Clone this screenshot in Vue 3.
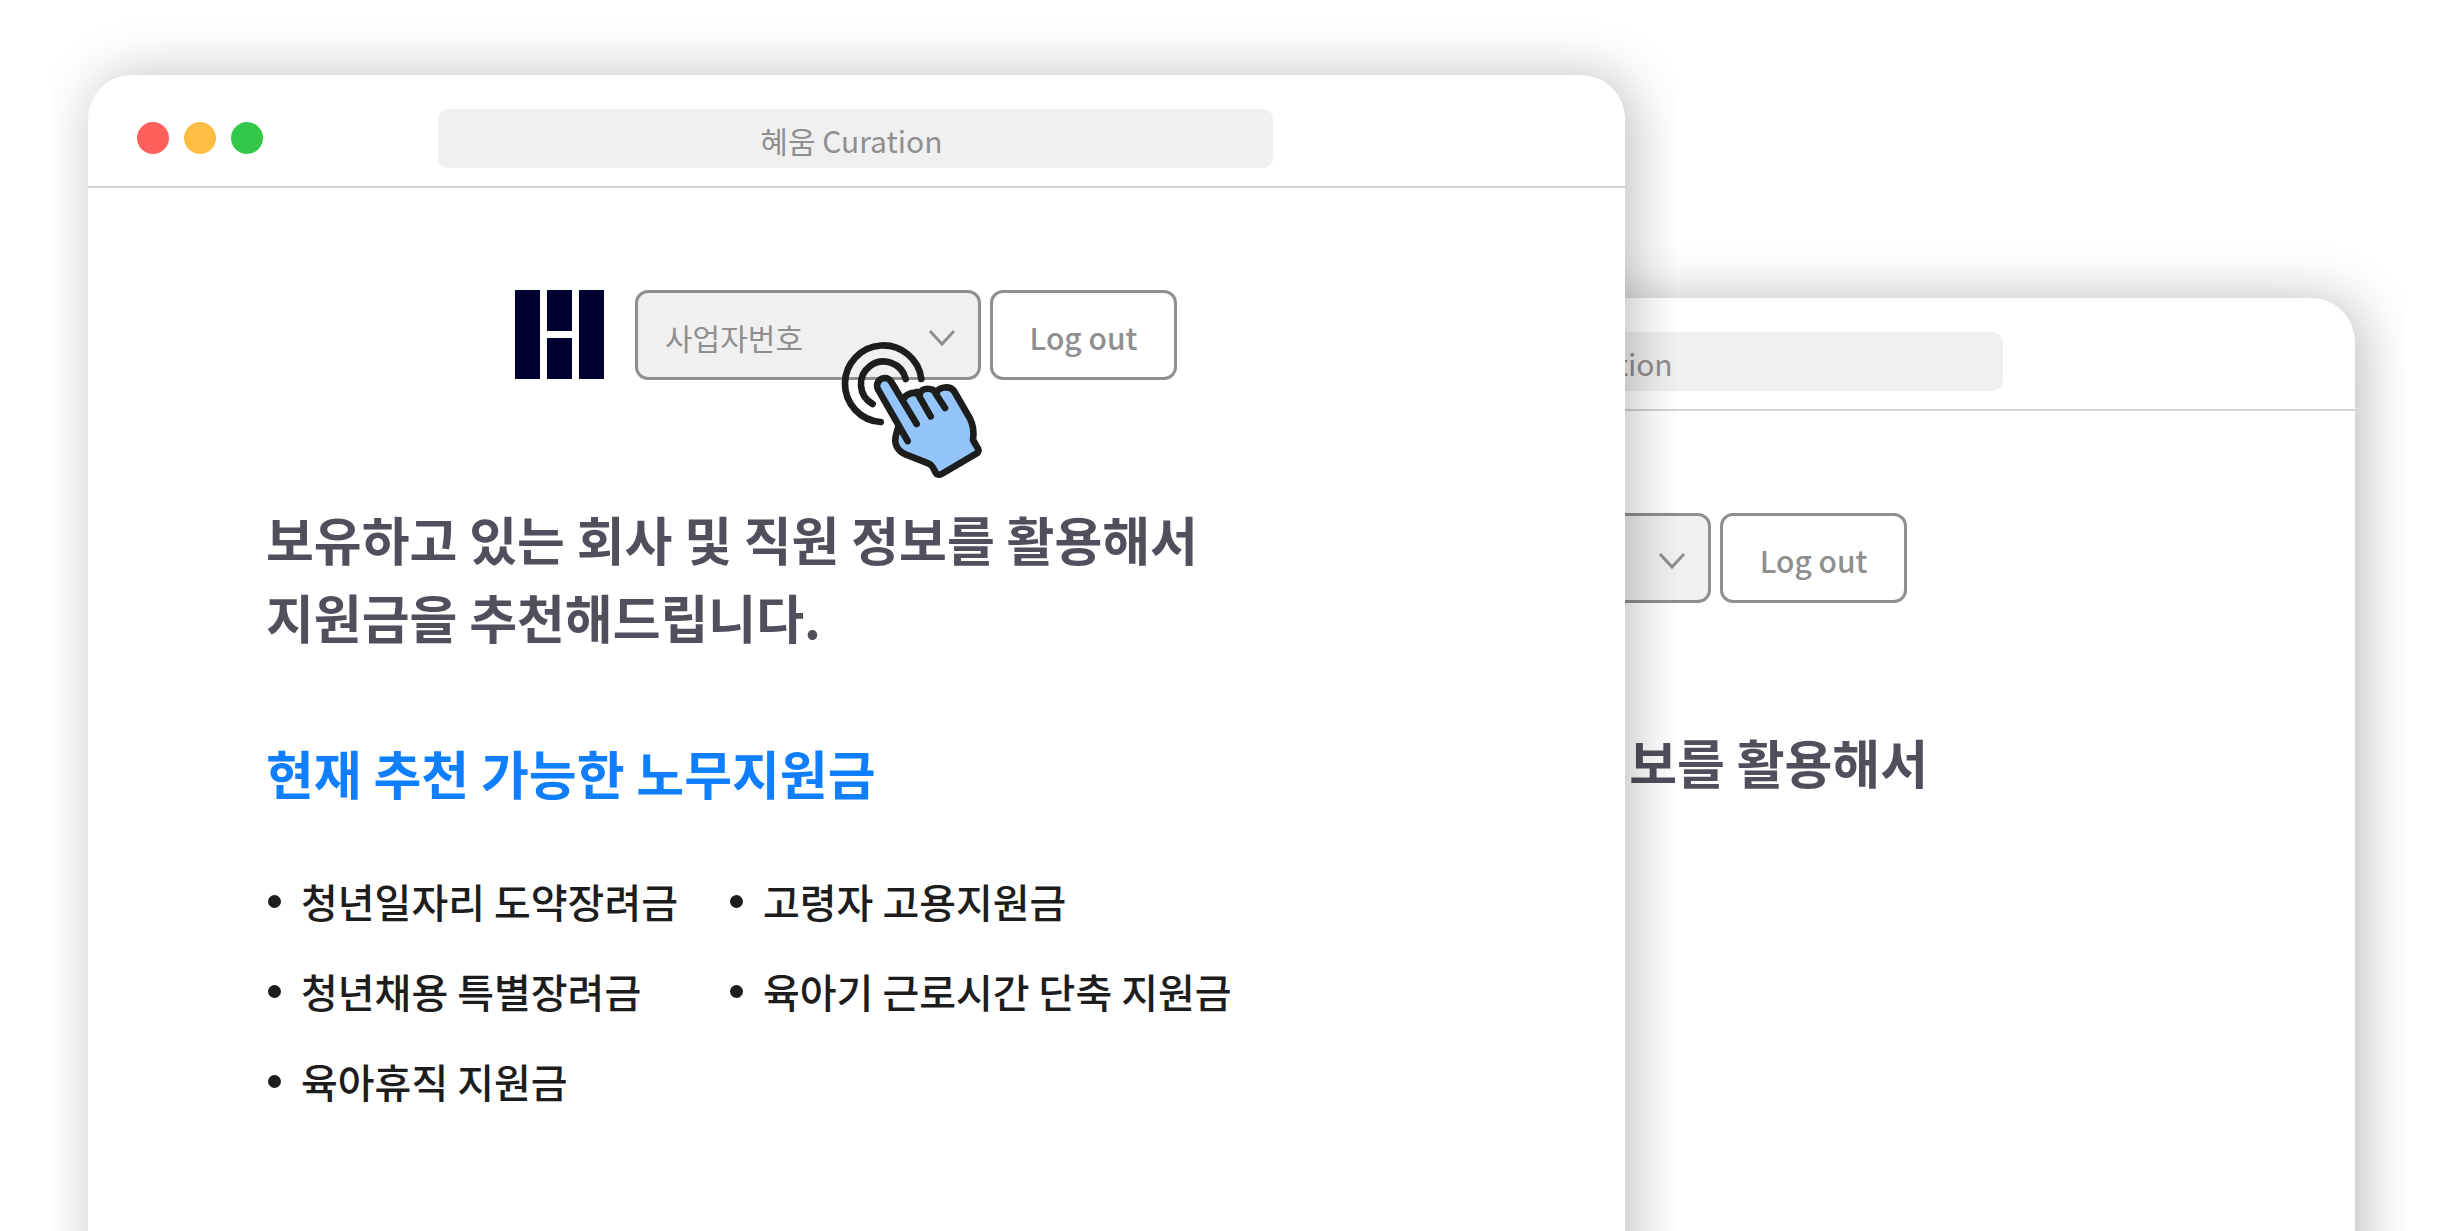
<script setup>
const headline = ['보유하고 있는 회사 및 직원 정보를 활용해서', '지원금을 추천해드립니다.']

const windows = [
  { id: 'back', interactive: false, grants: [] },
  {
    id: 'front',
    interactive: true,
    grants: [
      ['청년일자리 도약장려금', '청년채용 특별장려금', '육아휴직 지원금'],
      ['고령자 고용지원금', '육아기 근로시간 단축 지원금'],
    ],
  },
]
</script>

<template>
  <main class="stage">
    <section v-for="win in windows" :key="win.id" class="window" :class="win.id">
      <header class="titlebar">
        <div class="lights">
          <span class="light red"></span>
          <span class="light yellow"></span>
          <span class="light green"></span>
        </div>
        <input class="address" type="text" value="혜움 Curation" aria-label="주소" readonly />
      </header>

      <div class="content">
        <nav class="toolbar">
          <svg class="logo" viewBox="0 0 89 89" aria-hidden="true">
            <path d="M0 0h25v89H0zM32 0h25v41H32zM32 48h25v41H32zM64 0h25v89H64z" fill="#000030" />
          </svg>
          <div class="picker">
            <select class="select" aria-label="사업자번호">
              <option>사업자번호</option>
            </select>
            <svg class="chevron" viewBox="0 0 28 18" aria-hidden="true">
              <path d="M2 2l12 13L26 2" fill="none" stroke="#8f8f8f" stroke-width="3" />
            </svg>
            <svg v-if="win.interactive" class="pointer" viewBox="60 60 432 420" aria-hidden="true">
              <g fill="none" stroke="#1d1d1b" stroke-width="20" stroke-linecap="round" stroke-linejoin="round">
                <path d="M304 177A115 115 0 1 0 182 306" />
                <path d="M257 177A68 68 0 1 0 158 252" />
                <path
                  d="M263 363L174 208C166 191 177 175 194 174C203 174 210 179 214 186L249 240C255 224 276 212 300 223C304 206 334 198 350 221C354 202 389 195 402 213L449 294C459 313 463 333 459 360L474 386C477 391 475 397 470 400L365 462C358 466 350 464 347 458L338 441C335 435 330 432 325 430L258 404C232 393 221 371 228 345L236 317Z"
                  fill="#93c5fb"
                  stroke="none"
                />
                <path
                  d="M263 363L174 208C166 191 177 175 194 174C203 174 210 179 214 186L290 312M249 240C255 224 276 212 300 223M290 216L332 289M300 218C308 204 336 200 350 221M340 210L375 264M350 216C357 202 389 195 402 213L449 294C459 313 463 333 459 360L474 386C477 391 475 397 470 400L365 462C358 466 350 464 347 458L338 441C335 435 330 432 325 430L258 404C232 393 221 371 228 345L234 324"
                />
              </g>
            </svg>
          </div>
          <button class="logout" type="button">Log out</button>
        </nav>

        <h1 class="headline">
          <span v-for="line in headline" :key="line">{{ line }}</span>
        </h1>

        <template v-if="win.grants.length">
          <h2 class="subhead">현재 추천 가능한 노무지원금</h2>
          <div class="grants">
            <ul v-for="(column, i) in win.grants" :key="i">
              <li v-for="grant in column" :key="grant">{{ grant }}</li>
            </ul>
          </div>
        </template>
      </div>
    </section>
  </main>
</template>

<style>
body {
  margin: 0;
  background: #fff;
}
</style>

<style scoped>
.stage {
  display: grid;
  min-height: 100vh;
  overflow: hidden;
  font-family: "Noto Sans CJK KR", sans-serif;
}

.window {
  grid-area: 1 / 1;
  box-sizing: border-box;
  width: 62.45%;
  border-radius: 44px 44px 0 0;
  background: #fff;
  box-shadow: 7px 2px 56px rgba(0, 0, 0, 0.27);
  clip-path: inset(-60px -50px 0 -36px);
}

.front {
  margin: 75px 0 -80px 88px;
}

.back {
  justify-self: end;
  margin: 298px 106px -80px 0;
}

.titlebar {
  display: flex;
  align-items: center;
  box-sizing: border-box;
  height: 113px;
  padding: 15px 352px 0 49px;
  border-bottom: 2px solid #d4d4d4;
}

.lights {
  display: flex;
  gap: 15px;
  margin-right: 175px;
}

.light {
  width: 32px;
  height: 32px;
  border-radius: 50%;
}

.red {
  background: #ff605c;
}

.yellow {
  background: #ffbd44;
}

.green {
  background: #34c84a;
}

.address {
  flex: 1;
  min-width: 0;
  box-sizing: border-box;
  height: 59px;
  padding: 4px 8px 0 0;
  border: 0;
  border-radius: 10px;
  background: #f0f0f0;
  color: #8f8f8f;
  font: 400 30px "Noto Sans CJK KR", sans-serif;
  text-align: center;
}

.content {
  padding: 102px 178px 0;
}

.toolbar {
  display: flex;
  align-items: flex-start;
  margin-left: 249px;
}

.logo {
  width: 89px;
  height: 89px;
  margin-right: 31px;
}

.picker {
  position: relative;
  margin-right: 9px;
}

.select,
.logout {
  box-sizing: border-box;
  height: 90px;
  border: 3px solid #8f8f8f;
  border-radius: 13px;
  color: #8f8f8f;
}

.select {
  display: block;
  width: 346px;
  padding: 4px 27px 0;
  appearance: none;
  background: #f0f0f0;
  font: 400 30px "Noto Sans CJK KR", sans-serif;
}

.chevron {
  position: absolute;
  top: 39px;
  right: 25px;
  width: 28px;
  height: 18px;
}

.pointer {
  position: absolute;
  top: 50px;
  left: 205px;
  z-index: 1;
  width: 144px;
  height: 140px;
}

.logout {
  width: 187px;
  padding: 4px 0 0;
  background: #fff;
  font: 500 30px "Noto Sans CJK KR", sans-serif;
}

.headline,
.subhead {
  margin: 0;
  font-size: 52px;
  font-weight: 700;
  line-height: 78px;
  white-space: nowrap;
}

.headline {
  margin-top: 120px;
  color: #50505c;
}

.headline span {
  display: block;
}

.subhead {
  margin-top: 78px;
  color: #0f7fff;
}

.grants {
  display: flex;
  gap: 52px;
  margin-top: 44px;
  padding-left: 2px;
}

.grants ul {
  margin: 0;
  padding: 0;
  list-style: none;
}

.grants li {
  display: flex;
  align-items: center;
  gap: 20px;
  color: #1d1d1d;
  font-size: 40px;
  font-weight: 500;
  line-height: 90px;
  white-space: nowrap;
}

.grants li::before {
  content: "";
  width: 13px;
  height: 13px;
  border-radius: 50%;
  background: #1d1d1d;
}
</style>
